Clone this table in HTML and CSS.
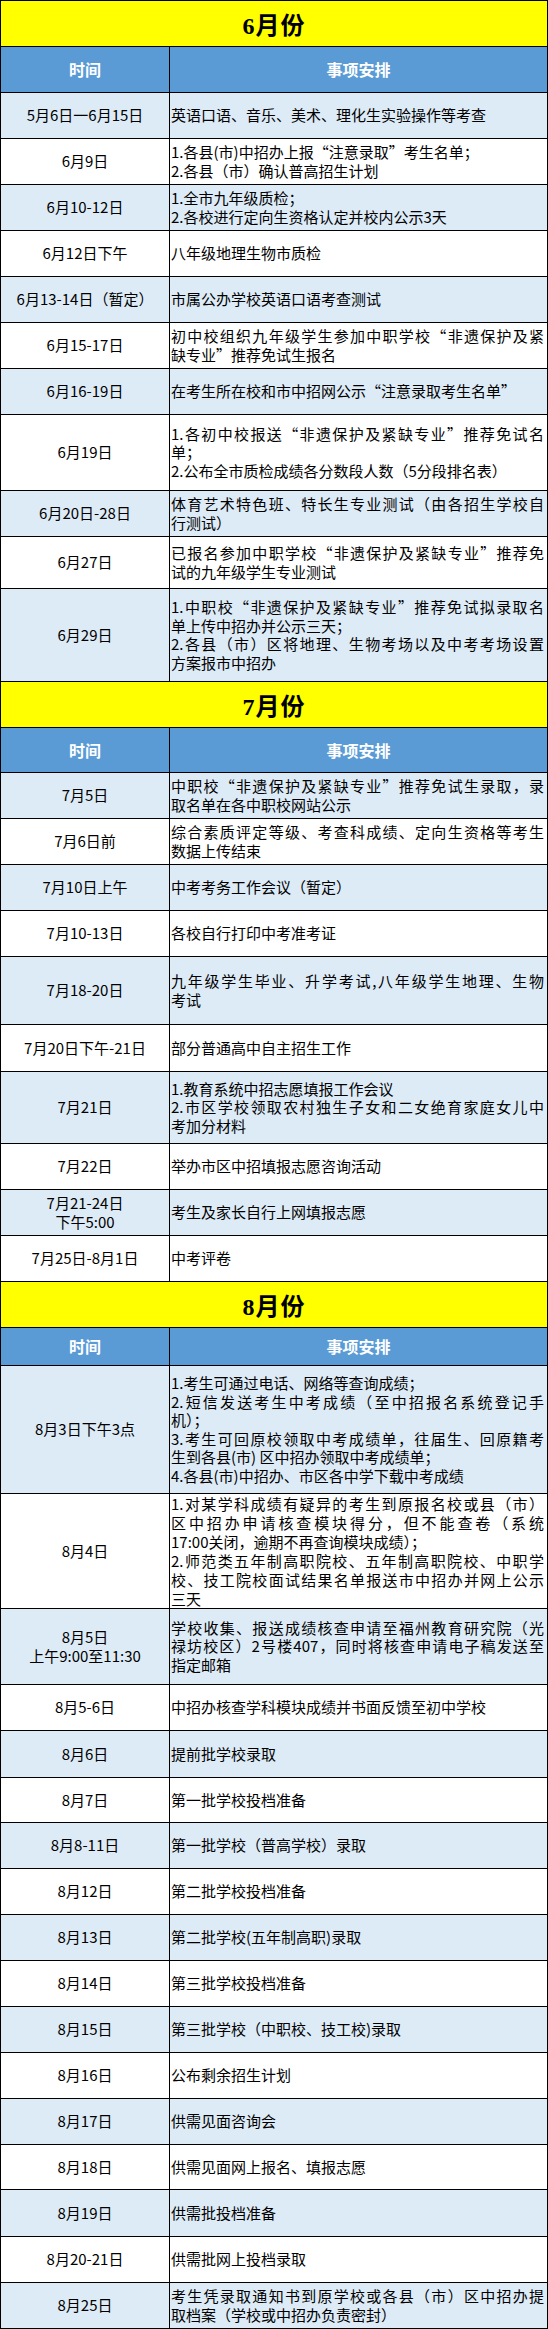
FILE: index.html
```html
<!DOCTYPE html>
<html lang="zh-CN">
<head>
<meta charset="utf-8">
<title>中招工作日程安排</title>
<link rel="stylesheet" href="styles.css">
</head>
<body>
<div class="sheet">
  <div class="month h45">6月份</div>
  <div class="row head h45"><div class="d">时间</div><div class="d">事项安排</div></div>
  <div class="row b h45"><div class="d">5月6日一6月15日</div><div class="t"><div class="tx">英语口语、音乐、美术、理化生实验操作等考查</div></div></div>
  <div class="row h45"><div class="d">6月9日</div><div class="t"><div class="tx">1.各县(市)中招办上报“注意录取”考生名单；<br>2.各县（市）确认普高招生计划</div></div></div>
  <div class="row b h45"><div class="d">6月10-12日</div><div class="t"><div class="tx">1.全市九年级质检；<br>2.各校进行定向生资格认定并校内公示3天</div></div></div>
  <div class="row h45"><div class="d">6月12日下午</div><div class="t"><div class="tx">八年级地理生物市质检</div></div></div>
  <div class="row b h45"><div class="d">6月13-14日（暂定）</div><div class="t"><div class="tx">市属公办学校英语口语考查测试</div></div></div>
  <div class="row h45"><div class="d">6月15-17日</div><div class="t"><div class="tx"><span class="j">初中校组织九年级学生参加中职学校“非遗保护及紧</span>缺专业”推荐免试生报名</div></div></div>
  <div class="row b h45"><div class="d">6月16-19日</div><div class="t"><div class="tx">在考生所在校和市中招网公示“注意录取考生名单”</div></div></div>
  <div class="row h75"><div class="d">6月19日</div><div class="t"><div class="tx"><span class="j">1.各初中校报送“非遗保护及紧缺专业”推荐免试名</span>单；<br>2.公布全市质检成绩各分数段人数（5分段排名表）</div></div></div>
  <div class="row b h45"><div class="d">6月20日-28日</div><div class="t"><div class="tx"><span class="j">体育艺术特色班、特长生专业测试（由各招生学校自</span>行测试）</div></div></div>
  <div class="row h51"><div class="d">6月27日</div><div class="t"><div class="tx"><span class="j">已报名参加中职学校“非遗保护及紧缺专业”推荐免</span>试的九年级学生专业测试</div></div></div>
  <div class="row b h92"><div class="d">6月29日</div><div class="t"><div class="tx"><span class="j">1.中职校“非遗保护及紧缺专业”推荐免试拟录取名</span>单上传中招办并公示三天；<br><span class="j">2.各县（市）区将地理、生物考场以及中考考场设置</span>方案报市中招办</div></div></div>

  <div class="month h45">7月份</div>
  <div class="row head h44"><div class="d">时间</div><div class="d">事项安排</div></div>
  <div class="row b h45"><div class="d">7月5日</div><div class="t"><div class="tx"><span class="j">中职校“非遗保护及紧缺专业”推荐免试生录取，录</span>取名单在各中职校网站公示</div></div></div>
  <div class="row h45"><div class="d">7月6日前</div><div class="t"><div class="tx"><span class="j">综合素质评定等级、考查科成绩、定向生资格等考生</span>数据上传结束</div></div></div>
  <div class="row b h45"><div class="d">7月10日上午</div><div class="t"><div class="tx">中考考务工作会议（暂定）</div></div></div>
  <div class="row h45"><div class="d">7月10-13日</div><div class="t"><div class="tx">各校自行打印中考准考证</div></div></div>
  <div class="row b h67"><div class="d">7月18-20日</div><div class="t"><div class="tx"><span class="j">九年级学生毕业、升学考试,八年级学生地理、生物</span>考试</div></div></div>
  <div class="row h46"><div class="d">7月20日下午-21日</div><div class="t"><div class="tx">部分普通高中自主招生工作</div></div></div>
  <div class="row b h71"><div class="d">7月21日</div><div class="t"><div class="tx">1.教育系统中招志愿填报工作会议<br><span class="j">2.市区学校领取农村独生子女和二女绝育家庭女儿中</span>考加分材料</div></div></div>
  <div class="row h45"><div class="d">7月22日</div><div class="t"><div class="tx">举办市区中招填报志愿咨询活动</div></div></div>
  <div class="row b h45"><div class="d">7月21-24日<br>下午5:00</div><div class="t"><div class="tx">考生及家长自行上网填报志愿</div></div></div>
  <div class="row h45"><div class="d">7月25日-8月1日</div><div class="t"><div class="tx">中考评卷</div></div></div>

  <div class="month h45">8月份</div>
  <div class="row head h37"><div class="d">时间</div><div class="d">事项安排</div></div>
  <div class="row b h127"><div class="d">8月3日下午3点</div><div class="t"><div class="tx">1.考生可通过电话、网络等查询成绩；<br><span class="j">2.短信发送考生中考成绩（至中招报名系统登记手</span>机）；<br><span class="j">3.考生可回原校领取中考成绩单，往届生、回原籍考</span>生到各县(市) 区中招办领取中考成绩单；<br>4.各县(市)中招办、市区各中学下载中考成绩</div></div></div>
  <div class="row h114"><div class="d">8月4日</div><div class="t"><div class="tx lh19"><span class="j">1.对某学科成绩有疑异的考生到原报名校或县（市）</span><span class="j">区中招办申请核查模块得分，但不能查卷（系统</span>17:00关闭，逾期不再查询模块成绩）；<br><span class="j">2.师范类五年制高职院校、五年制高职院校、中职学</span><span class="j">校、技工院校面试结果名单报送市中招办并网上公示</span>三天</div></div></div>
  <div class="row b h75"><div class="d">8月5日<br>上午9:00至11:30</div><div class="t"><div class="tx"><span class="j">学校收集、报送成绩核查申请至福州教育研究院（光</span><span class="j">禄坊校区）2号楼407，同时将核查申请电子稿发送至</span>指定邮箱</div></div></div>
  <div class="row h45"><div class="d">8月5-6日</div><div class="t"><div class="tx">中招办核查学科模块成绩并书面反馈至初中学校</div></div></div>
  <div class="row b h46"><div class="d">8月6日</div><div class="t"><div class="tx">提前批学校录取</div></div></div>
  <div class="row h44"><div class="d">8月7日</div><div class="t"><div class="tx">第一批学校投档准备</div></div></div>
  <div class="row b h45"><div class="d">8月8-11日</div><div class="t"><div class="tx">第一批学校（普高学校）录取</div></div></div>
  <div class="row h45"><div class="d">8月12日</div><div class="t"><div class="tx">第二批学校投档准备</div></div></div>
  <div class="row b h45"><div class="d">8月13日</div><div class="t"><div class="tx">第二批学校(五年制高职)录取</div></div></div>
  <div class="row h45"><div class="d">8月14日</div><div class="t"><div class="tx">第三批学校投档准备</div></div></div>
  <div class="row b h45"><div class="d">8月15日</div><div class="t"><div class="tx">第三批学校（中职校、技工校)录取</div></div></div>
  <div class="row h45"><div class="d">8月16日</div><div class="t"><div class="tx">公布剩余招生计划</div></div></div>
  <div class="row b h45"><div class="d">8月17日</div><div class="t"><div class="tx">供需见面咨询会</div></div></div>
  <div class="row h44"><div class="d">8月18日</div><div class="t"><div class="tx">供需见面网上报名、填报志愿</div></div></div>
  <div class="row b h46"><div class="d">8月19日</div><div class="t"><div class="tx">供需批投档准备</div></div></div>
  <div class="row h45"><div class="d">8月20-21日</div><div class="t"><div class="tx">供需批网上投档录取</div></div></div>
  <div class="row b h45"><div class="d">8月25日</div><div class="t"><div class="tx"><span class="j">考生凭录取通知书到原学校或各县（市）区中招办提</span>取档案（学校或中招办负责密封）</div></div></div>
</div>
</body>
</html>
```
FILE: styles.css
```css
html, body {
  margin: 0;
  padding: 0;
  background: #ffffff;
}

body {
  font-family: "Noto Sans CJK SC", "Noto Sans", sans-serif;
  font-size: 15px;
  color: #000000;
}

.sheet {
  width: 548px;
  box-sizing: border-box;
  border: 1px solid #000000;
  background: #000000;
  display: flex;
  flex-direction: column;
  gap: 1px;
}

.month {
  background: #ffff00;
  display: flex;
  align-items: center;
  justify-content: center;
  font-family: "Liberation Serif", "Noto Sans CJK SC", serif;
  font-weight: 700;
  font-size: 24px;
  letter-spacing: 1px;
}

.row {
  display: grid;
  grid-template-columns: 168px 1fr;
  gap: 1px;
}

.row > div {
  background: #ffffff;
  display: flex;
  align-items: center;
  line-height: 18.5px;
  overflow: hidden;
}

.row.b > div {
  background: #ddebf7;
}

.row.head > div {
  background: #5b9bd5;
  color: #ffffff;
  font-weight: 700;
  font-size: 16px;
}

.d {
  justify-content: center;
  text-align: center;
}

.t {
  padding: 0 3px 0 1px;
}

.tx {
  flex: 1;
  min-width: 0;
}

.lh19 {
  line-height: 19px;
}

.j {
  display: block;
  text-align: justify;
  text-align-last: justify;
  white-space: nowrap;
}

.h37 { height: 37px; }
.h44 { height: 44px; }
.h45 { height: 45px; }
.h46 { height: 46px; }
.h51 { height: 51px; }
.h67 { height: 67px; }
.h71 { height: 71px; }
.h75 { height: 75px; }
.h92 { height: 92px; }
.h114 { height: 114px; }
.h127 { height: 127px; }
```
